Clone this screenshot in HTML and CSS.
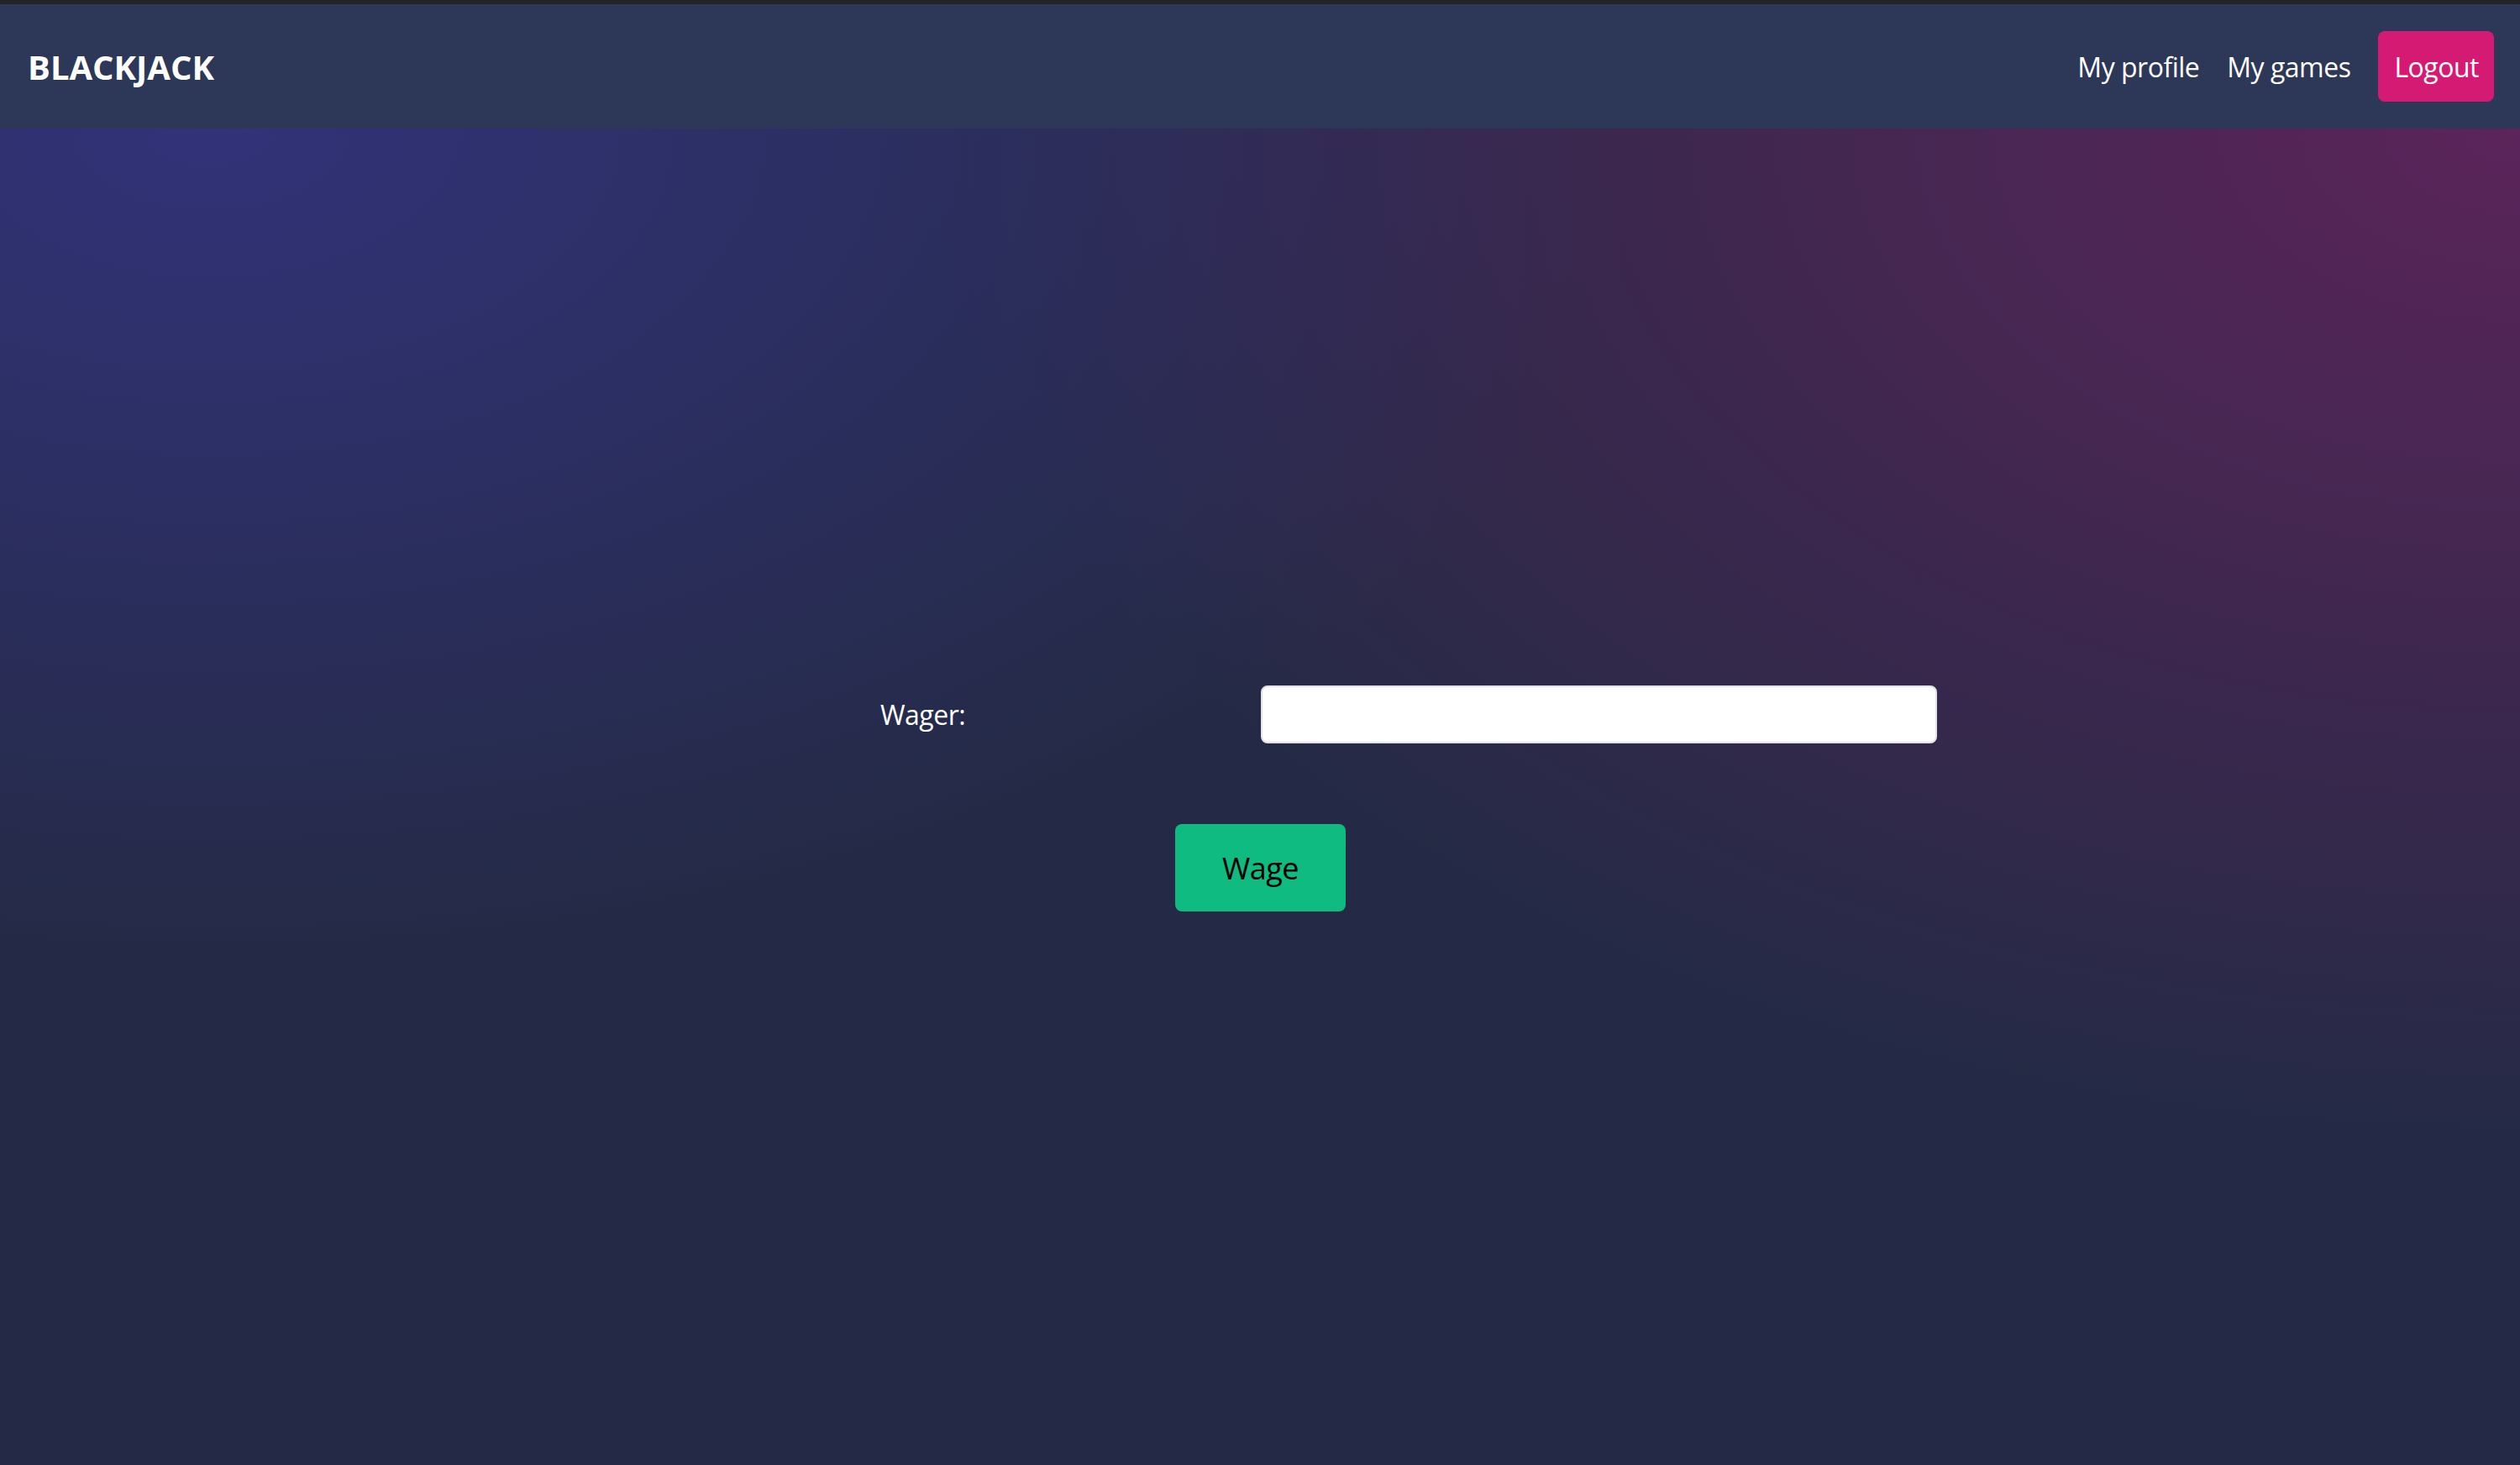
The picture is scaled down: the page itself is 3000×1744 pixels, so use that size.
FILE: index.html
```html
<!DOCTYPE html>
<html lang="en">
<head>
<meta charset="utf-8">
<title>Blackjack</title>
<link rel="stylesheet" href="styles.css">
</head>
<body>
<header class="topbar">
  <div class="brand">BLACKJACK</div>
  <nav class="nav">
    <a class="nav-link" href="#">My profile</a>
    <a class="nav-link" href="#">My games</a>
    <a class="nav-logout" href="#">Logout</a>
  </nav>
</header>
<main class="main">
  <form class="wager-form">
    <div class="wager-row">
      <label class="wager-label" for="wager">Wager:</label>
      <input class="wager-input" id="wager" type="text">
    </div>
    <div class="wager-actions">
      <button class="wage-btn" type="button">Wage</button>
    </div>
  </form>
</main>
</body>
</html>
```
FILE: styles.css
```css
* { box-sizing: border-box; }
html, body { margin: 0; padding: 0; }
body {
  width: 3000px;
  height: 1744px;
  overflow: hidden;
  font-family: "Open Sans", "Noto Sans", "Liberation Sans", sans-serif;
  background: #242a45;
  border-top: 5px solid #212428;
  display: flex;
  flex-direction: column;
}
.topbar {
  height: 148px;
  flex: none;
  background: #2d3757;
  display: flex;
  align-items: center;
  justify-content: space-between;
  padding: 0 31px 0 33px;
}
.brand {
  color: #fff;
  font-weight: 700;
  font-size: 40px;
}
.nav {
  display: flex;
  align-items: center;
  gap: 33px;
}
.nav-link, .nav-logout {
  color: #fff;
  text-decoration: none;
  font-size: 32px;
  letter-spacing: -0.5px;
}
.nav-logout {
  background: #d51a73;
  border-radius: 8px;
  height: 84px;
  padding: 0 18px 0 19px;
  display: flex;
  align-items: center;
}
.main {
  flex: 1;
  background-color: #242a45;
  background-image:
    radial-gradient(1700px 1000px at 250px 0, rgba(52, 52, 130, 0.85), rgba(52, 52, 130, 0) 100%),
    radial-gradient(1900px 1200px at 3000px 0, rgba(96, 36, 92, 0.92), rgba(96, 36, 92, 0) 100%);
  padding-top: 663px;
}
.wager-form {
  display: flex;
  flex-direction: column;
}
.wager-row {
  display: grid;
  grid-template-columns: 1fr 1fr;
  align-items: center;
}
.wager-label {
  justify-self: end;
  width: 452px;
  color: #fff;
  font-size: 32px;
  letter-spacing: -0.5px;
}
.wager-input {
  width: 805px;
  height: 69px;
  background: #fff;
  border: 2px solid #e2e3e8;
  border-radius: 8px;
  margin-left: 1px;
  outline: none;
}
.wager-actions {
  display: flex;
  justify-content: center;
  margin-top: 96px;
}
.wage-btn {
  width: 203px;
  height: 104px;
  background: #10bb81;
  border: none;
  border-radius: 8px;
  color: #000;
  font-family: inherit;
  font-size: 36px;
  letter-spacing: -0.5px;
  margin-left: 1px;
}
```
